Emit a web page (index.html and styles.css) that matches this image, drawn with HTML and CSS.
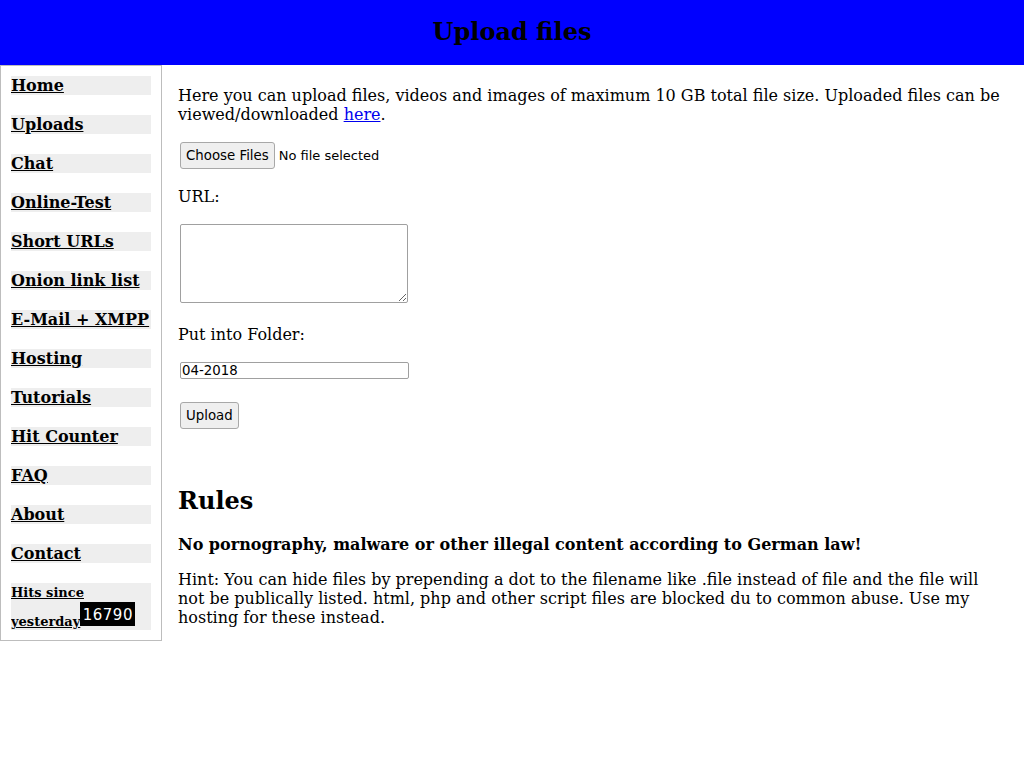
FILE: index.html
```
<!DOCTYPE html>
<html lang="en">
<head>
    <meta charset="UTF-8">
    <meta name="viewport" content="width=device-width, initial-scale=1.0">
    <title>Upload files</title>
    <link rel="stylesheet" href="styles.css">
</head>
<body>
    <header class="top">
        <h1>Upload files</h1>
    </header>

    <div class="page">
        <nav class="menu">
            <a href="#">Home</a>
            <a href="#">Uploads</a>
            <a href="#">Chat</a>
            <a href="#">Online-Test</a>
            <a href="#">Short URLs</a>
            <a href="#">Onion link list</a>
            <a href="#">E-Mail + XMPP</a>
            <a href="#">Hosting</a>
            <a href="#">Tutorials</a>
            <a href="#">Hit Counter</a>
            <a href="#">FAQ</a>
            <a href="#">About</a>
            <a href="#">Contact</a>
            <a href="#" class="counter">Hits since yesterday<span class="hits">16790</span></a>
        </nav>

        <main class="content">
            <p>Here you can upload files, videos and images of maximum 10 GB total file size. Uploaded files can be viewed/downloaded <a href="#">here</a>.</p>
            <form class="upload" action="#" method="post">
                <p class="file-row">
                    <label class="file-btn">Choose Files<input type="file" name="files[]" multiple hidden></label>
                    <span class="file-name">No file selected</span>
                </p>
                <p>URL:</p>
                <p><textarea name="url" rows="4" cols="28"></textarea></p>
                <p>Put into Folder:</p>
                <p class="folder-row"><input type="text" name="folder" value="04-2018" class="folder"></p>
                <p><button type="submit">Upload</button></p>
            </form>

            <h2>Rules</h2>
            <p class="strong">No pornography, malware or other illegal content according to German law!</p>
            <p>Hint: You can hide files by prepending a dot to the filename like .file instead of file and the file will not be publically listed. html, php and other script files are blocked du to common abuse. Use my hosting for these instead.</p>
        </main>
    </div>
</body>
</html>
```

FILE: styles.css
```
body {
    margin: 0;
    font-family: "DejaVu Serif", serif;
    font-size: 16px;
    color: #000;
    background: #fff;
}

.top {
    background: #0000ff;
    height: 65px;
    display: flex;
    align-items: center;
    justify-content: center;
}

.top h1 {
    margin: 0;
    font-size: 24px;
    line-height: 28px;
    position: relative;
    top: -1px;
}

.page {
    display: flex;
    align-items: flex-start;
}

.menu {
    flex: 0 0 140px;
    padding: 10px;
    border: 1px solid #bdbdbd;
    display: flex;
    flex-direction: column;
    gap: 20px;
}

.menu a {
    display: block;
    background: #eeeeee;
    color: #000;
    font-weight: bold;
    line-height: 19px;
}

.menu a.counter {
    font-size: 13px;
    line-height: 18px;
    padding-top: 1px;
    height: 46px;
    overflow: hidden;
}

.hits {
    display: inline-block;
    overflow: hidden;
    width: 55px;
    height: 24px;
    background: #000;
    color: #fff;
    font-family: "DejaVu Sans", sans-serif;
    font-weight: normal;
    font-size: 15px;
    letter-spacing: 0.5px;
    line-height: 26px;
    text-align: center;
    vertical-align: baseline;
}

.content {
    flex: 1;
    padding: 5px 16px 0 16px;
}

.content p {
    margin: 16px 0;
    line-height: 19px;
}

.content a {
    color: #0000ee;
}

.upload p.file-row {
    display: flex;
    align-items: center;
    margin-top: 18px;
    margin-bottom: 18px;
}

.file-btn,
.upload button {
    display: inline-flex;
    align-items: center;
    box-sizing: border-box;
    height: 27px;
    margin: 0 2px;
    padding: 0 5px;
    font-family: "DejaVu Sans", sans-serif;
    font-size: 13.33px;
    background: #efefef;
    border: 1px solid #a8a8a8;
    border-radius: 3px;
    color: #000;
}

.file-name {
    font-family: "DejaVu Sans", sans-serif;
    font-size: 13px;
    margin-left: 2px;
}

.upload textarea,
.upload input.folder {
    margin: 2px;
    font-family: "DejaVu Sans", sans-serif;
    font-size: 13.33px;
    border: 1px solid #a0a0a0;
    border-radius: 2px;
}

.upload textarea {
    width: 222px;
    height: 73px;
    padding: 2px;
}

.upload input.folder {
    width: 225px;
    height: 15px;
    padding: 0 1px;
}

.upload p.folder-row {
    margin-bottom: 19px;
}

.upload button {
    margin: 2px;
}

.content h2 {
    font-size: 24px;
    line-height: 28px;
    margin: 56px 0 20px 0;
}

.content p.strong {
    font-weight: bold;
}
```
